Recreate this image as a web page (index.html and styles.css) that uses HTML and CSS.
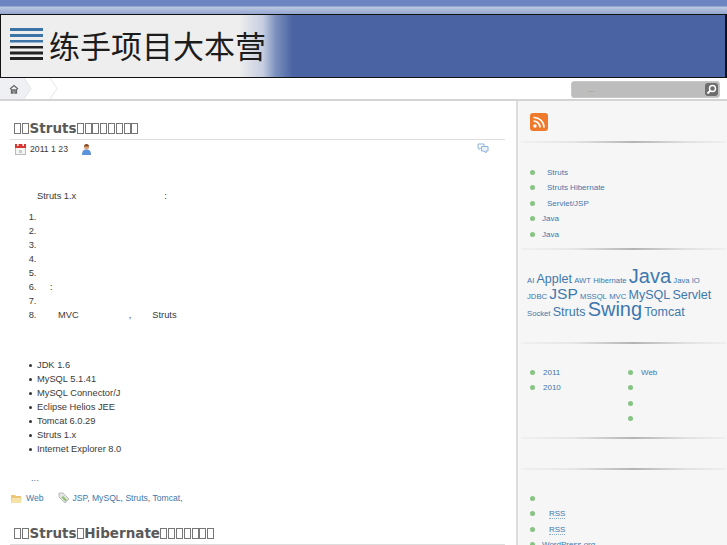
FILE: index.html
```html
<!DOCTYPE html>
<html lang="zh">
<head>
<meta charset="utf-8">
<title>练手项目大本营</title>
<link rel="stylesheet" href="styles.css">
</head>
<body>
<div class="topband"></div>
<header class="banner">
  <svg class="logo" width="33" height="33" viewBox="0 0 33 33"><g fill="#3d74a8"><rect y="0" width="33" height="3"/><rect y="6" width="33" height="3"/><rect y="12" width="33" height="2.5"/></g><g fill="#222"><rect y="18" width="33" height="2.5"/><rect y="23.500" width="33" height="3"/><rect y="29" width="33" height="3"/></g></svg>
  <h1 class="sitename">练手项目大本营</h1>
</header>
<nav class="crumbs">
  <svg class="crumb-art" width="60" height="21" viewBox="0 0 60 21"><path d="M0 0H24L31 10.500L24 21H0Z" fill="#eef0f3"/><path d="M24 0L31 10.500L24 21" fill="none" stroke="#e2e4e8"/><path d="M50 0L57 10.500L50 21" fill="none" stroke="#e6e6e6"/><path d="M10 11L14 7.500L18 11M11.500 11V15H13V12H15V15H16.500V11" fill="none" stroke="#666" stroke-width="1.300"/></svg>
  <form class="search"><span class="search-text">...</span><span class="search-btn"><svg width="11" height="11" viewBox="0 0 11 11"><circle cx="6.500" cy="4.500" r="3" fill="none" stroke="#fff" stroke-width="1.400"/><path d="M4.500 6.500L1.500 9.500" stroke="#fff" stroke-width="1.800"/></svg></span></form>
</nav>
<div class="page">
  <main class="main">
    <article class="post">
      <h2 class="post-title"><span class="tofu"></span><span class="tofu"></span>Struts<span class="tofu"></span><span class="tofu"></span><span class="tofu"></span><span class="tofu"></span><span class="tofu"></span><span class="tofu"></span><span class="tofu"></span><span class="tofu"></span></h2>
      <div class="meta">
        <svg class="ico" width="11" height="12" viewBox="0 0 11 12"><rect x=".5" y="1.500" width="10" height="10" fill="#f4f4f4" stroke="#bbb"/><rect y="1" width="11" height="4" fill="#d8362f"/><rect x="2" y="0" width="1.500" height="3" fill="#fff"/><rect x="7.500" y="0" width="1.500" height="3" fill="#fff"/><rect x="4" y="7" width="3" height="3" fill="#ccc"/></svg>
        <span class="date">2011 1 23</span>
        <svg class="ico" width="11" height="11" viewBox="0 0 11 11"><circle cx="5.500" cy="3" r="2.500" fill="#dba47c"/><path d="M3 2.500A2.500 2.500 0 0 1 8 2.500Z" fill="#8a4a24"/><path d="M1 11C1 6.500 3 5.500 5.500 5.500S10 6.500 10 11Z" fill="#5c93d8"/></svg>
        <svg class="comments" width="12" height="11" viewBox="0 0 12 11"><path d="M1 1H7V5H3.500L2 6.500V5H1Z" fill="#fff" stroke="#8fb4dc"/><path d="M4.500 3.500H11V8H9V10L7 8H4.500Z" fill="#eaf2fa" stroke="#8fb4dc"/></svg>
      </div>
      <p class="lead"><span class="gap-s"></span>Struts 1.x<span class="gap-l"></span>:</p>
      <ol class="steps">
        <li>&nbsp;</li><li>&nbsp;</li><li>&nbsp;</li><li>&nbsp;</li><li>&nbsp;</li>
        <li><span class="gap-a"></span>:</li>
        <li>&nbsp;</li>
        <li><span class="gap-b"></span>MVC<span class="gap-c"></span>,<span class="gap-d"></span>Struts</li>
      </ol>
      <ul class="env">
        <li>JDK 1.6</li><li>MySQL 5.1.41</li><li>MySQL Connector/J</li><li>Eclipse Helios JEE</li><li>Tomcat 6.0.29</li><li>Struts 1.x</li><li>Internet Explorer 8.0</li>
      </ul>
      <p class="more"><a href="#">...</a></p>
      <div class="post-foot">
        <svg class="ico" width="11" height="9" viewBox="0 0 11 9"><path d="M0 1H4L5 2H10V9H0Z" fill="#eec678"/><path d="M1 4H11L10 9H0Z" fill="#f7e2a8"/></svg>
        <a href="#" class="cat">Web</a>
        <svg class="ico tagico" width="12" height="12" viewBox="0 0 12 12"><path d="M1 1H5L11 7L7 11L1 5Z" fill="#e4e4e4" stroke="#bbb"/><path d="M5 4L9 8L7.500 9.500L3.500 5.500Z" fill="#8cc070"/></svg>
        <span class="tags"><a href="#">JSP</a>, <a href="#">MySQL</a>, <a href="#">Struts</a>, <a href="#">Tomcat</a>,</span>
      </div>
    </article>
    <article class="post next">
      <h2 class="post-title"><span class="tofu"></span><span class="tofu"></span>Struts<span class="tofu"></span>Hibernate<span class="tofu"></span><span class="tofu"></span><span class="tofu"></span><span class="tofu"></span><span class="tofu"></span><span class="tofu"></span><span class="tofu"></span></h2>
    </article>
  </main>
  <aside class="side">
    <section class="widget rss-w">
      <svg width="18" height="18" viewBox="0 0 18 18"><rect width="18" height="18" rx="3" fill="#f07a2c"/><circle cx="5" cy="13" r="1.700" fill="#fff"/><path d="M3.500 8A6.500 6.500 0 0 1 10 14.500M3.500 4.500A10 10 0 0 1 14 14.500" fill="none" stroke="#fff" stroke-width="1.700"/></svg>
    </section>
    <hr class="rule">
    <ul class="dots recent">
      <li class="ind"><a href="#">Struts</a></li>
      <li class="ind"><a href="#">Struts Hibernate</a></li>
      <li class="ind"><a href="#">Servlet/JSP</a></li>
      <li><a href="#">Java</a></li>
      <li><a href="#">Java</a></li>
    </ul>
    <hr class="rule">
    <div class="cloud">
      <a class="t8" href="#">AI</a> <a class="t13" href="#">Applet</a> <a class="t8" href="#">AWT</a> <a class="t8" href="#">Hibernate</a> <a class="t20" href="#">Java</a> <a class="t8" href="#">Java IO</a> <a class="t8" href="#">JDBC</a> <a class="t16" href="#">JSP</a> <a class="t8" href="#">MSSQL</a> <a class="t8" href="#">MVC</a> <a class="t13" href="#">MySQL</a> <a class="t13" href="#">Servlet</a> <a class="t8" href="#">Socket</a> <a class="t13" href="#">Struts</a> <a class="t20" href="#">Swing</a> <a class="t13" href="#">Tomcat</a>
    </div>
    <hr class="rule">
    <div class="cols">
      <ul class="dots"><li><a href="#">2011</a></li><li><a href="#">2010</a></li></ul>
      <ul class="dots"><li><a href="#">Web</a></li><li>&nbsp;</li><li>&nbsp;</li><li>&nbsp;</li></ul>
    </div>
    <hr class="rule">
    <div class="spacer"></div>
    <hr class="rule">
    <ul class="dots metalist">
      <li>&nbsp;</li>
      <li class="ind2"><a class="abbr" href="#">RSS</a></li>
      <li class="ind2"><a class="abbr" href="#">RSS</a></li>
      <li><a href="#">WordPress.org</a></li>
    </ul>
  </aside>
</div>
</body>
</html>
```

FILE: styles.css
```css
* { box-sizing: border-box; }
html, body { margin: 0; height: 545px; overflow: hidden; }
body { font-family: "Liberation Sans", Arial, sans-serif; font-size: 9.300px; color: #3a3a3a; background: #fff; }
a { color: #3f78ac; text-decoration: none; }

.topband { height: 14px; background: linear-gradient(#6c84bf 0, #6c84bf 6px, #bcc8e2 7px, #94a6d0 14px); }
.banner { height: 64px; display: flex; align-items: center; gap: 6px; padding: 0 0 3px 9px; border: 1px solid #111; border-width: 1px 2px 1px 1px;
  background: linear-gradient(90deg, #eeeeee 0, #eeeeee 238px, #c5cde0 262px, #7a8fbc 275px, #4a64a3 292px, #4a64a3 100%); }
.logo { flex: none; }
.sitename { margin: 0; font: 400 31px/1 "Noto Sans CJK SC", sans-serif; color: #1c1c1c; }

.crumbs { height: 23px; display: flex; justify-content: space-between; border-bottom: 2px solid #d4d4d4; padding-right: 7px; }
.crumb-art { display: block; flex: none; }
.search { width: 149px; height: 17px; margin-top: 3px; display: flex; align-items: center; justify-content: space-between; padding: 0 1px 0 16px; background: #bdbdbd; border: 1px solid #c8c8c8; border-radius: 3px; color: #888; font-size: 8px; }
.search-btn { width: 13px; height: 13px; background: #6e6e6e; border-radius: 3px; display: flex; align-items: center; justify-content: center; }

.page { display: grid; grid-template-columns: 516px 211px; height: 444px; }
.main { padding: 0 11px 0 10px; overflow: hidden; }
.post-title { margin: 0; padding: 0 0 3px 4px; height: 20px; font: 700 13.500px/17px "DejaVu Sans", sans-serif; color: #5a5a5a; border-bottom: 1px solid #ddd; display: flex; align-items: center; }
.tofu { width: 7px; height: 11px; margin: 0 .4px; border: 1px solid #777; flex: none; }
.post { padding-top: 19px; }
.next { padding-top: 19px; }
.meta { position: relative; display: flex; align-items: center; gap: 4px; padding: 0 0 0 5px; height: 18px; font-size: 8.700px; }
.date { margin-right: 9px; }
.comments { position: absolute; right: 16px; top: 3px; }
.ico { flex: none; }
.lead { margin: 0; padding-top: 31px; line-height: 14px; padding-left: 6px; }
.gap-s { display: inline-block; width: 21px; }
.gap-l { display: inline-block; width: 88px; }
.steps { margin: 0; padding: 7px 0 0 29px; line-height: 14px; }
.gap-a { display: inline-block; width: 11px; }
.gap-b { display: inline-block; width: 19px; }
.gap-c { display: inline-block; width: 50px; }
.gap-d { display: inline-block; width: 21px; }
.env { list-style: none; margin: 0; padding: 36px 0 0 27px; line-height: 14px; }
.env li { position: relative; }
.env li::before { content: ""; position: absolute; left: -8px; top: 6px; width: 3px; height: 3px; border-radius: 50%; background: #333; }
.more { margin: 0; padding: 15px 0 0 21px; line-height: 14px; }
.post-foot { display: flex; align-items: center; padding: 5px 0 0 1px; height: 21px; font-size: 8.600px; }
.cat { margin: 0 14px 0 4px; }
.tagico { margin-right: 3px; }
.tags { color: #555; }

.side { background: #f6f6f6; border-left: 2px solid #dcdcdc; overflow: hidden; font-size: 8px; }
.rss-w { padding: 12px 0 0 12px; height: 40px; }
.rule { margin: 0 0 0 3px; width: 205px; height: 2px; border: 0; background: linear-gradient(90deg, #f0f0f0, #e6e6e6 25%, #b4b4b4 55%, #e0e0e0 80%, #f0f0f0); }
.dots { list-style: none; margin: 0; padding: 0; line-height: 15.400px; }
.dots li { position: relative; padding-left: 24px; }
.dots li::before { content: ""; position: absolute; left: 12px; top: 5px; width: 5px; height: 5px; border-radius: 50%; background: #86c484; }
.dots li.ind { padding-left: 29px; }
.dots li.ind2 { padding-left: 31px; }
.recent { padding-top: 22px; height: 105px; }
.cloud { padding: 20px 8px 0 9px; height: 92px; line-height: 13px; }
.cloud a { color: #3e78ae; }
.t8 { font-size: 7.700px; }
.t13 { font-size: 12.500px; }
.t16 { font-size: 15.500px; }
.t20 { font-size: 20px; }
.cols { display: grid; grid-template-columns: 98px 1fr; padding-top: 21px; height: 93px; }
.cols .dots li { padding-left: 25px; }
.spacer { height: 29px; }
.metalist { padding-top: 21px; }
.abbr { border-bottom: 1px dotted #8aa8c8; }
```
